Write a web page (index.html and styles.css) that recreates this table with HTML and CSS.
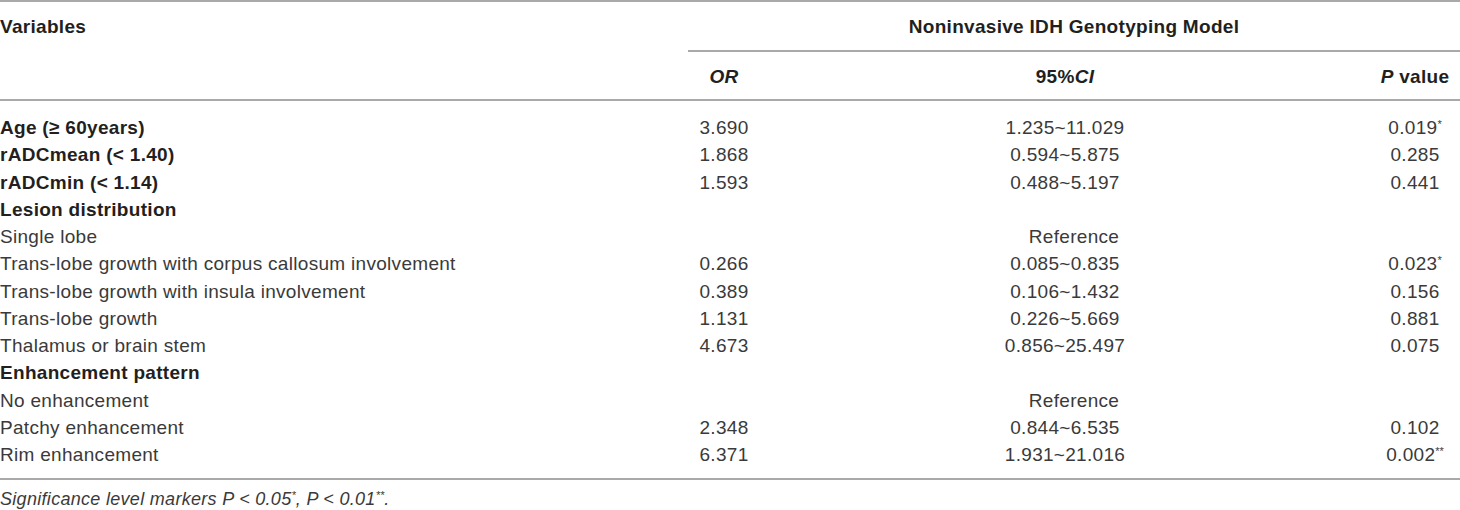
FILE: index.html
```html
<!DOCTYPE html>
<html lang="en">
<head>
<meta charset="utf-8">
<title>Noninvasive IDH Genotyping Model</title>
<link rel="stylesheet" href="styles.css">
</head>
<body>
<div class="wrap">
<table class="t">
  <colgroup>
    <col class="c-var">
    <col class="c-or">
    <col class="c-ci">
    <col class="c-p">
  </colgroup>
  <thead>
    <tr class="h1">
      <th class="var" rowspan="2">Variables</th>
      <th class="grp" colspan="3">Noninvasive IDH Genotyping Model</th>
    </tr>
    <tr class="h2">
      <th><i>OR</i></th>
      <th>95%<i>CI</i></th>
      <th><i>P</i> value</th>
    </tr>
  </thead>
  <tbody>
    <tr class="first"><td class="lbl b">Age (≥ 60years)</td><td>3.690</td><td>1.235~11.029</td><td>0.019<sup>*</sup></td></tr>
    <tr><td class="lbl b">rADCmean (&lt; 1.40)</td><td>1.868</td><td>0.594~5.875</td><td>0.285</td></tr>
    <tr><td class="lbl b">rADCmin (&lt; 1.14)</td><td>1.593</td><td>0.488~5.197</td><td>0.441</td></tr>
    <tr><td class="lbl b">Lesion distribution</td><td></td><td></td><td></td></tr>
    <tr><td class="lbl">Single lobe</td><td colspan="3" class="ref">Reference</td></tr>
    <tr><td class="lbl">Trans-lobe growth with corpus callosum involvement</td><td>0.266</td><td>0.085~0.835</td><td>0.023<sup>*</sup></td></tr>
    <tr><td class="lbl">Trans-lobe growth with insula involvement</td><td>0.389</td><td>0.106~1.432</td><td>0.156</td></tr>
    <tr><td class="lbl">Trans-lobe growth</td><td>1.131</td><td>0.226~5.669</td><td>0.881</td></tr>
    <tr><td class="lbl">Thalamus or brain stem</td><td>4.673</td><td>0.856~25.497</td><td>0.075</td></tr>
    <tr><td class="lbl b">Enhancement pattern</td><td></td><td></td><td></td></tr>
    <tr><td class="lbl">No enhancement</td><td colspan="3" class="ref">Reference</td></tr>
    <tr><td class="lbl">Patchy enhancement</td><td>2.348</td><td>0.844~6.535</td><td>0.102</td></tr>
    <tr class="last"><td class="lbl">Rim enhancement</td><td>6.371</td><td>1.931~21.016</td><td>0.002<sup>**</sup></td></tr>
  </tbody>
</table>
<p class="note">Significance level markers <span>P</span> &lt; 0.05<sup>*</sup>, <span>P</span> &lt; 0.01<sup>**</sup>.</p>
</div>
</body>
</html>
```

FILE: styles.css
```css
html, body {
  margin: 0;
  padding: 0;
  background: #ffffff;
}

body {
  font-family: "Liberation Sans", Arial, Helvetica, sans-serif;
  font-size: 19px;
  letter-spacing: 0.3px;
  color: #3a3a3a;
}

.wrap {
  width: 1460px;
}

.t {
  width: 1460px;
  border-collapse: collapse;
  table-layout: fixed;
  border-top: 2px solid #a9a9a9;
}

.c-var { width: 688px; }
.c-or { width: 72px; }
.c-ci { width: 610px; }
.c-p { width: 90px; }

th, td {
  padding: 0;
  line-height: 27px;
  font-weight: normal;
  text-align: center;
  white-space: nowrap;
}

thead th {
  font-weight: bold;
  color: #231f20;
}

.h1 th {
  padding-top: 11px;
  padding-bottom: 10px;
  vertical-align: top;
}

.h1 .var {
  text-align: left;
  border-bottom: 2px solid #a9a9a9;
}

.h1 .grp {
  border-bottom: 2px solid #a9a9a9;
}

.h2 th {
  padding-top: 11px;
  padding-bottom: 9px;
  border-bottom: 2px solid #a9a9a9;
}

tbody td {
  line-height: 27.25px;
}

tbody .first td {
  padding-top: 13px;
}

tbody .last td {
  padding-bottom: 10px;
  border-bottom: 2px solid #a9a9a9;
}

.lbl {
  text-align: left;
}

.b {
  font-weight: bold;
  color: #231f20;
}

.ref {
  text-align: center;
}

sup {
  font-size: 11px;
  line-height: 0;
  vertical-align: 6px;
  letter-spacing: 0;
}

.note {
  margin: 0;
  padding-top: 6px;
  line-height: 27px;
  font-size: 18px;
  font-style: italic;
  color: #3a3a3a;
}
```
